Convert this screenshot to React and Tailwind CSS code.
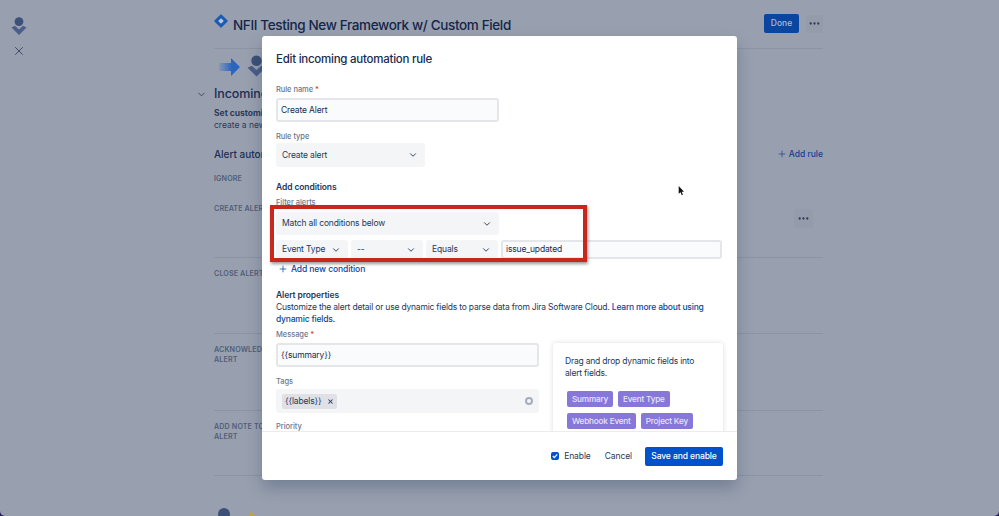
import { ChevronDown, Ellipsis, Plus, X } from "lucide-react";

const Logo = ({ className }) => (
  <svg viewBox="0 0 16 19" className={className}>
    <circle cx="8" cy="4.6" r="4.4" fill="#3d5178" />
    <path d="M0.5 10.5 L4 8.8 L8 12.5 L12 8.8 L15.5 10.5 L8 18 Z" fill="#4a5e87" />
  </svg>
);

function Select({ label, width, height = "h-[23px]" }) {
  return (
    <div className={`${width} ${height} shrink-0 bg-[#f4f5f7] rounded-[3px] flex items-center justify-between pl-[6px] pr-[7px] text-[8.5px] tracking-[-0.15px] whitespace-nowrap text-[#253858]`}>
      <span>{label}</span>
      <ChevronDown size={10} strokeWidth={2.2} />
    </div>
  );
}

function Label({ children, required, className = "" }) {
  return (
    <div className={`text-[7.5px] leading-[11px] font-medium tracking-[-0.05px] text-[#6b778c] ${className}`}>
      {children}
      {required && <span className="text-[#de350b]"> *</span>}
    </div>
  );
}

function TextBox({ value, className = "" }) {
  return (
    <div className={`bg-[#fafbfc] border-2 border-[#e4e6ea] rounded-[3px] flex items-center pl-[3px] text-[8.5px] tracking-[-0.15px] text-[#172b4d] ${className}`}>
      {value}
    </div>
  );
}

function Field({ children }) {
  return (
    <span className="h-[16px] px-[5px] bg-[#8777d9] rounded-[2px] text-[8.2px] tracking-[-0.2px] leading-[16px] font-medium text-[#e8e5f8]">
      {children}
    </span>
  );
}

function RuleRow({ label, height, more }) {
  return (
    <div className={`${height} mt-[6px] first:mt-[3px] pt-[5px] relative border-b border-[#8b93a4] text-[7.2px] leading-[9.5px] font-semibold tracking-[0.1px] text-[#525e78]`}>
      <div className="w-[72px]">{label}</div>
      {more && (
        <div className="absolute right-[10px] top-[10px] w-[19px] h-[19px] bg-[#949cab] rounded-[3px] flex items-center justify-center text-[#2c3a58]">
          <Ellipsis size={13} strokeWidth={2.2} />
        </div>
      )}
    </div>
  );
}

function Background() {
  return (
    <div className="flex h-full">
      <div className="w-[214px] shrink-0 relative pl-[11px] pt-[17px]">
        <Logo className="w-[16px] h-[19px]" />
        <X size={14} strokeWidth={1.4} className="mt-[8px] ml-[1px] text-[#2c3a58]" />
        <ChevronDown size={11} strokeWidth={1.8} className="absolute right-[7px] top-[89px] text-[#2c3a58]" />
      </div>
      <div className="w-[609px] shrink-0">
        <div className="h-[49px] border-b border-[#8b93a4] flex items-start justify-between pt-[14px]">
          <div className="flex items-start">
            <div className="w-[10px] h-[10px] mt-[2px] ml-[2px] rotate-45 bg-[#1a5bb5] rounded-[1px] flex items-center justify-center">
              <div className="w-[4px] h-[4px] bg-[#b9c6dc]" />
            </div>
            <div className="ml-[7px] text-[13.5px] tracking-[-0.36px] leading-[22px] font-medium text-[#14264a]">NFII Testing New Framework w/ Custom Field</div>
          </div>
          <div className="flex items-center gap-[7px]">
            <div className="w-[35px] h-[19px] bg-[#0a45a0] rounded-[2px] text-[8.5px] leading-[19px] text-center font-medium text-[#a9bddd]">Done</div>
            <div className="w-[17px] h-[18px] bg-[#949cab] rounded-[3px] flex items-center justify-center text-[#2c3a58]">
              <Ellipsis size={13} strokeWidth={2.2} />
            </div>
          </div>
        </div>
        <div className="flex items-center h-[23px] mt-[6px] ml-[5px]">
          <svg viewBox="0 0 22 18" className="w-[22px] h-[18px]">
            <defs>
              <linearGradient id="arrow">
                <stop offset="0" stopColor="#2a66c0" stopOpacity="0.15" />
                <stop offset="0.6" stopColor="#2a66c0" />
              </linearGradient>
            </defs>
            <path d="M0 5 H12 V0 L21 9 L12 18 V13 H0 Z" fill="url(#arrow)" />
          </svg>
          <Logo className="w-[19px] h-[23px] ml-[6px]" />
        </div>
        <div className="mt-[6px] text-[12.5px] tracking-[-0.1px] leading-[20px] font-medium text-[#1c2e52]">Incoming rules</div>
        <div className="mt-[3px] text-[8.5px] leading-[12px] text-[#2c3a58]">
          <div className="font-bold">Set customized rules</div>
          <div>create a new alert</div>
        </div>
        <div className="mt-[15px] flex items-center justify-between h-[16px]">
          <div className="text-[10px] font-medium text-[#1c2e52]">Alert automation</div>
          <div className="flex items-center gap-[2px] text-[8.5px] font-medium text-[#123f8f]">
            <Plus size={10} strokeWidth={1.6} />
            Add rule
          </div>
        </div>
        <div className="mt-[11px] h-[23px] pt-[1px] text-[7.2px] leading-[9.5px] font-semibold tracking-[0.1px] text-[#525e78]">IGNORE</div>
        <div>
          <RuleRow label="CREATE ALERT" height="h-[59px]" more />
          <RuleRow label="CLOSE ALERT" height="h-[70px]" />
          <RuleRow label="ACKNOWLEDGE ALERT" height="h-[71px]" />
          <RuleRow label="ADD NOTE TO ALERT" height="h-[59px]" />
        </div>
        <div className="flex items-start mt-[32px] ml-[4px] gap-[20px]">
          <div className="w-[12px] h-[12px] rounded-full bg-[#3d5178]" />
          <div className="w-[5px] h-[6px] bg-[#c5a23c] [clip-path:polygon(0_0,100%_60%,100%_100%,0_100%)] mt-[4px]" />
        </div>
      </div>
    </div>
  );
}

function Modal() {
  return (
    <div className="absolute left-[262px] top-[36px] w-[475px] h-[444px] bg-white rounded-[3px] shadow-[0_8px_16px_rgba(9,30,66,0.25)] flex flex-col">
      <div className="h-[395px] overflow-hidden px-[14px] pt-[15px]">
        <h1 className="text-[11.5px] tracking-[-0.25px] leading-[17px] font-medium text-[#172b4d]">Edit incoming automation rule</h1>
        <Label required className="mt-[16px]">Rule name</Label>
        <TextBox value="Create Alert" className="mt-[3px] w-[223px] h-[24px]" />
        <Label className="mt-[9px]">Rule type</Label>
        <div className="mt-[1px]"><Select label="Create alert" width="w-[149px]" height="h-[24px]" /></div>
        <div className="mt-[14px] text-[8.5px] leading-[12px] font-semibold tracking-[-0.1px] text-[#253858]">Add conditions</div>
        <Label className="mt-[4px]">Filter alerts</Label>
        <div className="mt-[4px]"><Select label="Match all conditions below" width="w-[223px]" /></div>
        <div className="mt-[5px] flex gap-[3px]">
          <Select label="Event Type" width="w-[72px]" height="h-[19px]" />
          <Select label="--" width="w-[72px]" height="h-[19px]" />
          <Select label="Equals" width="w-[72px]" height="h-[19px]" />
          <TextBox value="issue_updated" className="w-[221px] h-[19px]" />
        </div>
        <div className="mt-[4px] ml-[2px] flex items-center gap-[3px] text-[8.5px] tracking-[-0.1px] leading-[12px] font-medium text-[#0747a6]">
          <Plus size={10} strokeWidth={1.8} />
          Add new condition
        </div>
        <div className="mt-[14px] text-[8.5px] leading-[12px] font-semibold tracking-[-0.1px] text-[#253858]">Alert properties</div>
        <p className="text-[8.5px] tracking-[-0.2px] leading-[12px] text-[#253858] w-[440px]">
          Customize the alert detail or use dynamic fields to parse data from Jira Software Cloud. <span className="text-[#0747a6] font-medium">Learn more about using dynamic fields.</span>
        </p>
        <div className="mt-[4px] flex items-start gap-[14px]">
          <div className="w-[263px] shrink-0">
            <Label required>Message</Label>
            <TextBox value="{{summary}}" className="mt-[3px] h-[24px]" />
            <Label className="mt-[9px]">Tags</Label>
            <div className="mt-[2px] h-[24px] bg-[#f4f5f7] rounded-[3px] flex items-center justify-between pl-[6px] pr-[6px]">
              <div className="h-[15px] pl-[3px] pr-[3px] bg-[#dfe1e6] rounded-[2px] flex items-center gap-[5px] text-[8.5px] tracking-[-0.15px] text-[#253858]">
                {"{{labels}}"}
                <X size={7} strokeWidth={3.5} />
              </div>
              <div className="w-[8px] h-[8px] rounded-full border-[2px] border-[#a5adba]" />
            </div>
            <Label className="mt-[8px]">Priority</Label>
          </div>
          <div className="w-[170px] h-[120px] mt-[14px] shrink-0 bg-white rounded-[3px] shadow-[0_0_5px_rgba(9,30,66,0.15)] px-[12px] pt-[12px]">
            <p className="text-[8.5px] tracking-[-0.2px] leading-[12px] text-[#253858]">Drag and drop dynamic fields into alert fields.</p>
            <div className="mt-[12px] ml-[2px] flex flex-wrap gap-x-[5px] gap-y-[6px] w-[150px]">
              <Field>Summary</Field>
              <Field>Event Type</Field>
              <Field>Webhook Event</Field>
              <Field>Project Key</Field>
            </div>
          </div>
        </div>
      </div>
      <div className="h-[49px] border-t border-[#ebecf0] flex items-center justify-end pr-[14px] text-[8.5px] tracking-[-0.1px] text-[#253858]">
        <div className="w-[8px] h-[8px] bg-[#0052cc] rounded-[2px] flex items-center justify-center">
          <svg viewBox="0 0 8 8" className="w-[8px] h-[8px]">
            <path d="M1.8 4 L3.4 5.6 L6.2 2.4" fill="none" stroke="white" strokeWidth="1.2" />
          </svg>
        </div>
        <span className="ml-[5px]">Enable</span>
        <span className="ml-[14px]">Cancel</span>
        <div className="ml-[13px] w-[78px] h-[19px] bg-[#0052cc] rounded-[2px] text-white font-medium text-center leading-[19px]">Save and enable</div>
      </div>
      {/* annotation drawn on top of the screenshot */}
      <div className="absolute left-[8px] top-[169px] w-[317px] h-[57px] border-[4px] border-[#c8271c] shadow-[1px_2px_3px_rgba(0,0,0,0.4)]" />
      <svg viewBox="0 0 10 14" className="absolute left-[416px] top-[150px] w-[7px] h-[10px]">
        <path d="M1 0 V11 L3.6 8.8 L5.4 13 L7 12.3 L5.3 8.2 H8.6 Z" fill="#111" />
      </svg>
    </div>
  );
}

export default function App() {
  return (
    <div className="w-[999px] h-[516px] bg-[#241c5c]">
      <div className="relative w-full h-full overflow-hidden rounded-b-[5px] bg-[#98a0af] font-['Inter',sans-serif]">
        <Background />
        <Modal />
      </div>
    </div>
  );
}
